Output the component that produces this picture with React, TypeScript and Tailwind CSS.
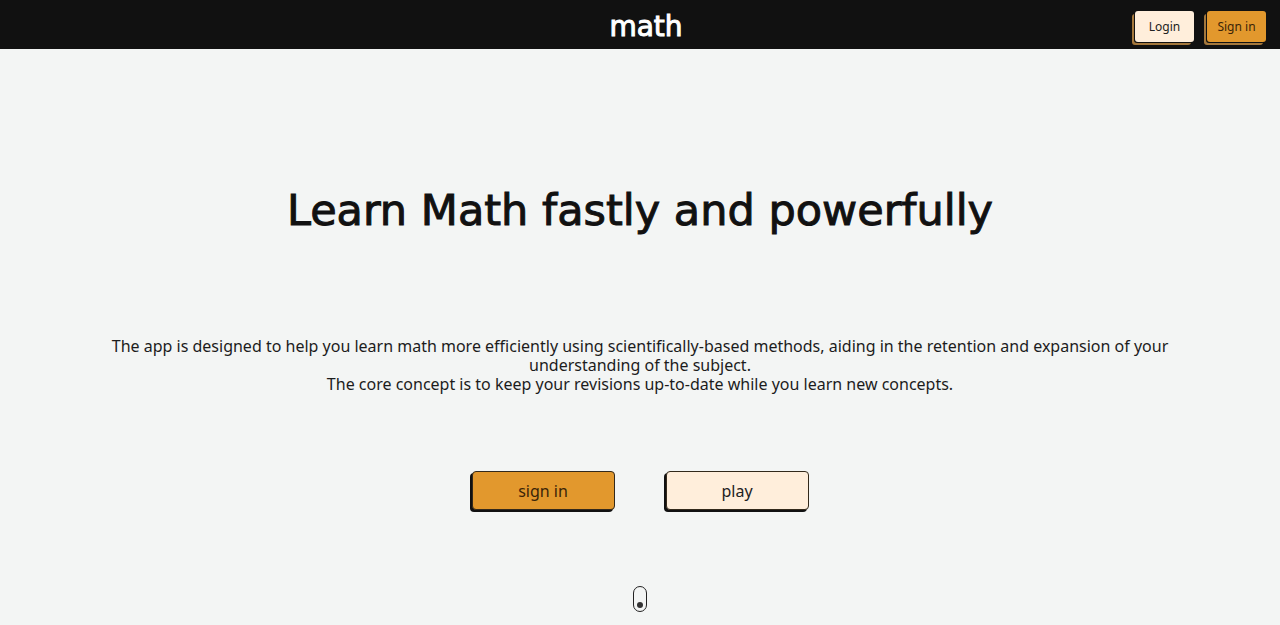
const logoFont = "font-['DejaVu_Sans',sans-serif]";

function Header() {
  return (
    <header className="grid h-[49px] grid-cols-[1fr_auto_1fr] items-start bg-[#111111] pr-3.5 pl-[26px]">
      <span />
      <a
        href="#"
        className={`${logoFont} pt-[11px] text-[28px] leading-8 font-normal text-white [-webkit-text-stroke:1px_white]`}
      >
        math
      </a>
      <nav className="flex justify-end gap-[13px] pt-[11px]">
        <button className="h-[31px] w-[59px] rounded-[3px] bg-[#ffeedb] text-[12px] text-[#222] shadow-[-1px_1px_0_#111,-3px_3px_0_#a5783c]">
          Login
        </button>
        <button className="h-[31px] w-[59px] rounded-[3px] bg-[#e2982d] text-[12px] text-[#3a2408] shadow-[-1px_1px_0_#111,-3px_3px_0_#a5783c]">
          Sign in
        </button>
      </nav>
    </header>
  );
}

export default function App() {
  return (
    <div className="flex min-h-screen flex-col bg-[#f3f5f4] font-['Noto_Sans',sans-serif] text-[#1c1c1c]">
      <Header />
      <main className="flex flex-1 flex-col items-center px-[100px] pt-[136px] text-center">
        <h1 className={`${logoFont} text-[43px] leading-[50px] font-normal text-[#111] [-webkit-text-stroke:1px_#111]`}>
          Learn Math fastly and powerfully
        </h1>
        <p className="mt-[102px] text-[16px] leading-[19px]">
          The app is designed to help you learn math more efficiently using scientifically-based methods, aiding in the
          retention and expansion of your understanding of the subject.
          <br />
          The core concept is to keep your revisions up-to-date while you learn new concepts.
        </p>
        <div className="mt-[77px] flex gap-[51px]">
          <button className="h-[39px] w-[143px] rounded-[4px] border border-[#33291b] bg-[#e2982d] text-[16px] text-[#3a2408] shadow-[-2px_2px_0_#111]">
            sign in
          </button>
          <button className="h-[39px] w-[143px] rounded-[4px] border border-[#33291b] bg-[#ffeedb] text-[16px] text-[#222] shadow-[-2px_2px_0_#111]">
            play
          </button>
        </div>
        <div className="mt-auto mb-[13px] flex h-[26px] w-[14px] items-end justify-center rounded-full border border-[#222] pb-[3px]">
          <span className="size-[6px] rounded-full bg-[#333]" />
        </div>
      </main>
    </div>
  );
}
